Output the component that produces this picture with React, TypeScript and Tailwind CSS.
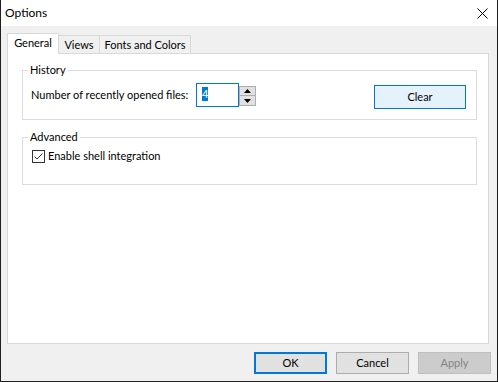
import React from "react";

function SpinArrow({ up }: { up: boolean }) {
  return (
    <svg width="7" height="4" viewBox="0 0 7 4" className="block">
      {up ? <path d="M0 4 L3.5 0 L7 4 Z" fill="#000" /> : <path d="M0 0 L3.5 4 L7 0 Z" fill="#000" />}
    </svg>
  );
}

function Btn({ children, kind }: { children: React.ReactNode; kind: "default" | "normal" | "disabled" }) {
  const cls =
    kind === "default"
      ? "border-2 border-[#0078d7] bg-[#e1e1e1] text-black"
      : kind === "normal"
      ? "border border-[#adadad] bg-[#e1e1e1] text-black"
      : "border border-[#bfbfbf] bg-[#cccccc] text-[#838383]";
  return <div className={`w-[73px] h-[22px] flex items-center justify-center ${cls}`}>{children}</div>;
}

export default function App() {
  return (
    <div className="w-[498px] h-[382px] bg-[#f0f0f0] border-x border-b border-[#1f1f1f] flex flex-col font-['Lato','Noto_Sans',sans-serif] text-[11px] leading-[16px] text-black select-none">
      {/* Title bar */}
      <div className="h-[26px] bg-white flex items-center justify-between pl-[4px] pr-[9px]">
        <span className="text-[12px]">Options</span>
        <svg width="11" height="11" viewBox="0 0 11 11" className="block">
          <path d="M0.5 0.5 L10.5 10.5 M10.5 0.5 L0.5 10.5" stroke="#000" strokeWidth="1" />
        </svg>
      </div>

      {/* Body */}
      <div className="flex-1 flex flex-col pl-[6px] pr-[8px] pt-[7px]">
        {/* Tabs */}
        <div className="h-[20px] flex items-end">
          <div className="relative z-10 -mb-px h-[21px] w-[52px] bg-white border border-b-0 border-[#d9d9d9] flex items-center justify-center pb-[2px] whitespace-nowrap">
            General
          </div>
          <div className="h-[18px] w-[41px] bg-[#f0f0f0] border border-l-0 border-b-0 border-[#d9d9d9] flex items-center justify-center whitespace-nowrap">
            Views
          </div>
          <div className="h-[18px] w-[91px] bg-[#f0f0f0] border border-l-0 border-b-0 border-[#d9d9d9] flex items-center justify-center whitespace-nowrap">
            Fonts and Colors
          </div>
        </div>

        {/* Panel */}
        <div className="h-[291px] bg-white border border-[#d9d9d9] pl-[14px] pr-[11px] pt-[8px] flex flex-col">
          {/* History */}
          <fieldset className="border border-[#dcdcdc] pl-[8px] pr-[10px] pb-[10px]">
            <legend className="-ml-[3px] px-[2px] leading-[16px]">History</legend>
            <div className="flex items-start pt-[5px] h-[31px]">
              <span className="w-[165px] mt-[4px] whitespace-nowrap">Number of recently opened files:</span>
              <div className="w-[43px] h-[24px] border border-[#0078d7] bg-white flex items-start pl-[5px] pt-[3px]">
                <span className="bg-[#0078d7] text-white leading-[14px] w-[6px] text-center">4</span>
              </div>
              <div className="mt-[3px] w-[17px] h-[20px] flex flex-col">
                <div className="h-[10px] border border-[#adadad] bg-[#e1e1e1] flex items-center justify-center">
                  <SpinArrow up />
                </div>
                <div className="h-[10px] border border-t-0 border-[#adadad] bg-[#e1e1e1] flex items-center justify-center">
                  <SpinArrow up={false} />
                </div>
              </div>
              <div className="ml-auto mt-[2px] w-[92px] h-[24px] border border-[#0078d7] bg-[#e5f1fb] flex items-center justify-center">
                Clear
              </div>
            </div>
          </fieldset>

          {/* Advanced */}
          <fieldset className="mt-[9px] border border-[#dcdcdc] pl-[9px] pr-[10px] pb-[20px]">
            <legend className="-ml-[4px] px-[2px] leading-[16px]">Advanced</legend>
            <div className="flex items-center pt-[3px] h-[19px]">
              <svg width="13" height="13" viewBox="0 0 13 13" className="block shrink-0">
                <rect x="0.5" y="0.5" width="12" height="12" fill="#fff" stroke="#333" />
                <path d="M2.5 6.5 L5 9 L10.5 3.5" fill="none" stroke="#333" strokeWidth="1" />
              </svg>
              <span className="ml-[3px] whitespace-nowrap">Enable shell integration</span>
            </div>
          </fieldset>
        </div>

        {/* Buttons */}
        <div className="mt-[8px] -mr-[2px] flex justify-end gap-[9px]">
          <Btn kind="default">OK</Btn>
          <Btn kind="normal">Cancel</Btn>
          <Btn kind="disabled">Apply</Btn>
        </div>
      </div>
    </div>
  );
}
